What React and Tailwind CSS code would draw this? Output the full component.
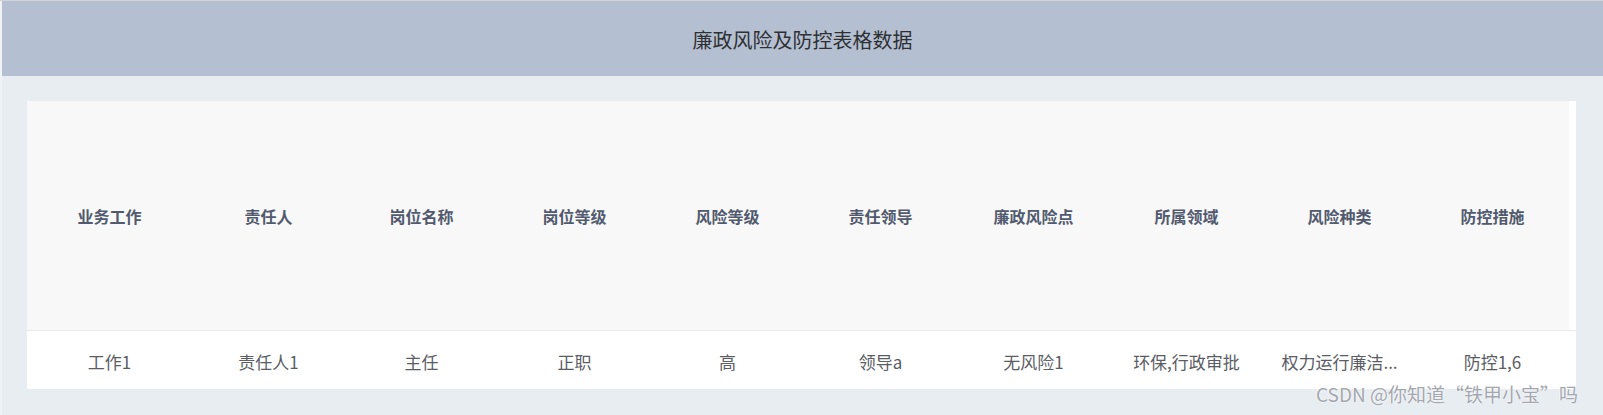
import React from "react";

const headers = ["业务工作", "责任人", "岗位名称", "岗位等级", "风险等级", "责任领导", "廉政风险点", "所属领域", "风险种类", "防控措施"];
const row = ["工作1", "责任人1", "主任", "正职", "高", "领导a", "无风险1", "环保,行政审批", "权力运行廉洁...", "防控1,6"];
const widths = ["w-[165px]", "w-[153px]", "w-[153px]", "w-[153px]", "w-[153px]", "w-[153px]", "w-[153px]", "w-[153px]", "w-[153px]", "w-[153px]"];

export default function App() {
  return (
    <div
      className="relative w-[1603px] h-[415px] overflow-hidden border-t border-[#d4d4d4] bg-[#f0f2f5] pl-[2px] flex flex-col"
      style={{ fontFamily: '"Noto Sans CJK SC", "Noto Sans", sans-serif' }}
    >
      <div className="h-[75px] bg-[#b4c0d2] flex items-center justify-center shrink-0">
        <span className="text-[20px] text-[#2f3033] leading-none pt-[3px]">廉政风险及防控表格数据</span>
      </div>
      <div className="flex-1 bg-[#e8edf1] pl-[25px] pt-[25px]">
        <div className="w-[1549px] bg-white flex flex-col">
          <div className="flex h-[230px] border-b border-[#e8eaec]">
            {headers.map((h, i) => (
              <div
                key={h}
                className={`${widths[i]} shrink-0 bg-[#f8f8f8] flex items-center justify-center text-[16px] font-bold text-[#515a6e]`}
              >
                {h}
              </div>
            ))}
            <div className="flex-1 bg-white" />
          </div>
          <div className="flex h-[58px]">
            {row.map((c, i) => (
              <div
                key={i}
                className={`${widths[i]} shrink-0 flex items-center justify-center px-[8px] pt-[3px] text-[17px] text-[#5a5d64] whitespace-nowrap`}
              >
                {c}
              </div>
            ))}
          </div>
        </div>
      </div>
      <div
        className="absolute left-[1316px] top-[383px] text-[19px] leading-none text-[#a3a7ae] whitespace-nowrap"
        style={{ textShadow: "0 0 2px #fff, 0 0 1px #fff" }}
      >
        CSDN @你知道“铁甲小宝”吗
      </div>
    </div>
  );
}
